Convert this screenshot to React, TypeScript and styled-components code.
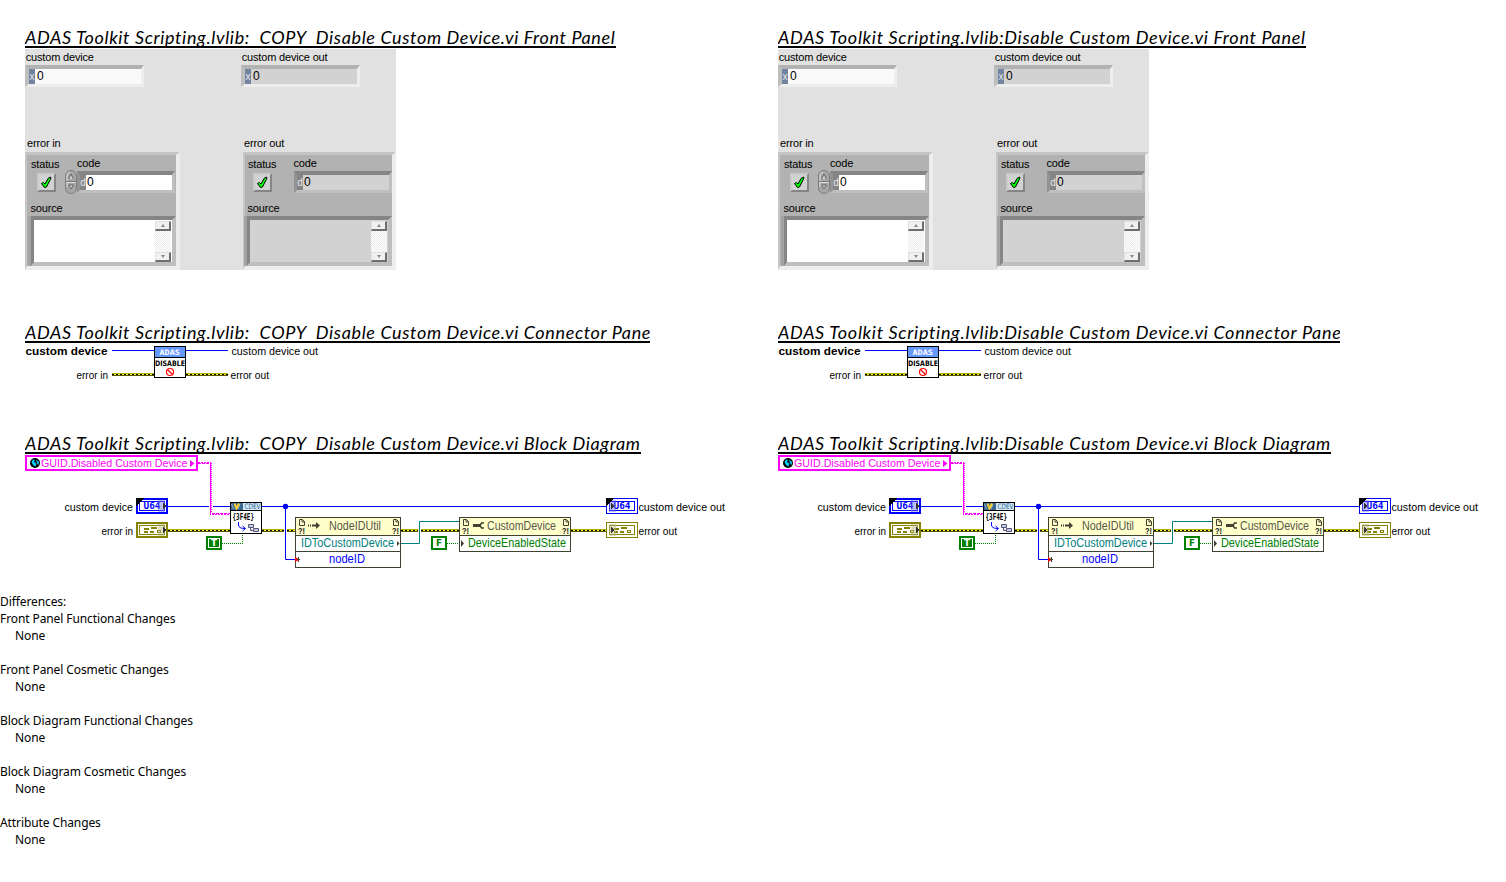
import React from 'react';
import styled, { createGlobalStyle } from 'styled-components';

const Global = createGlobalStyle`
  *{box-sizing:border-box}
  body{margin:0;background:#fff;color:#000;font-family:"Liberation Sans",Arial,sans-serif;overflow:hidden}
  svg{display:block}
`;
const Page = styled.main`width:1506px;height:882px;overflow:hidden;`;
const Columns = styled.div`display:flex;padding-left:25px;height:593px;`;
const Report = styled.section`width:753px;flex:none;`;
const Heading = styled.h2<{ $w: number; $top: number; $ls: number }>`
  margin:${p => p.$top}px 0 0;width:${p => p.$w}px;height:22px;
  border-bottom:2px solid #000;overflow:hidden;white-space:pre;
  font:italic 400 18px/22px Lato,sans-serif;letter-spacing:${p => p.$ls}px;
  font-variant-ligatures:none;
`;
const Panel = styled.div`
  margin-top:1px;width:371px;height:221px;background:#e1e1e1;display:flex;overflow:hidden;
`;
const PanelColumn = styled.div`width:216px;flex:none;display:flex;flex-direction:column;`;
const Label = styled.div<{ $x?: number; $top?: number }>`
  font-size:11px;line-height:14px;height:14px;padding-left:${p => p.$x ?? 0}px;
  margin-top:${p => p.$top ?? 0}px;white-space:nowrap;letter-spacing:-.17px;
`;
const Numeric = styled.div<{ $out?: boolean }>`
  margin:1px 0 0;width:119px;height:22px;display:flex;
  border:4px solid;border-width:4px 3px 3px 4px;
  border-color:#b2b2b2 #eee #eee #bebebe;
  background:${p => p.$out ? '#d2d2d2' : '#fafafa'};
  font-size:12px;line-height:15px;
`;
const Radix = styled.span<{ $code?: boolean }>`
  width:6px;background:${p => p.$code ? '#858585' : '#7284a0'};color:#e4e8ee;font-size:10px;text-align:center;
  margin-right:${p => p.$code ? 1 : 2}px;flex:none;overflow:hidden;
`;
const Cluster = styled.div<{ $out?: boolean }>`
  margin-top:2px;margin-left:${p => p.$out ? 2 : 0}px;width:${p => p.$out ? 153 : 155}px;height:118px;
  padding-left:${p => p.$out ? 0 : 2}px;
  border:3px solid;border-width:3px 4px 4px 2px;border-color:#c4c4c4 #ededed #ededed #c6c6c6;
  background:#b2b2b2;
`;
const StatusRow = styled.div`display:flex;height:46px;`;
const StatusCell = styled.div<{ $w: number }>`width:${p => p.$w}px;flex:none;padding-top:2px;`;
const Check = styled.div`
  margin:2px 0 0 8px;width:19px;height:19px;border:2px solid;
  border-color:#cacaca #858585 #858585 #cacaca;background:#d2d2d2;
`;
const CodeCell = styled.div`flex:1;padding-top:1px;`;
const CodeRow = styled.div`display:flex;height:24px;align-items:center;`;
const CodeField = styled.div<{ $out?: boolean }>`
  width:98px;height:22px;display:flex;border:3px solid;border-width:4px 3px 3px 3px;
  margin-left:${p => p.$out ? 1 : 0}px;
  border-color:#858585 #bfbfbf #bfbfbf #949494;background:${p => p.$out ? '#d2d2d2' : '#fff'};
  font-size:12px;line-height:15px;
`;
const SourceFrame = styled.div`
  width:148px;height:50px;margin:1px 0 0 -1px;border-left:3px solid #a4a4a4;
`;
const Source = styled.div<{ $out?: boolean }>`
  width:145px;height:50px;border:4px solid;border-width:4px 4px 4px 3px;
  border-color:#858585 #bebebe #bebebe #858585;background:${p => p.$out ? '#d2d2d2' : '#fff'};
  display:flex;justify-content:flex-end;padding:1px 1px 0 0;
`;
const Scroll = styled.div`
  width:16px;height:41px;display:flex;flex-direction:column;justify-content:space-between;
  background:repeating-conic-gradient(#fff 0 25%,#ececec 0 50%) 0 0/2px 2px;
`;
const ScrollButton = styled.div`
  height:10px;border:1px solid;border-width:1px 2px 2px 1px;border-color:#e0e0e0 #6e6e6e #6e6e6e #e0e0e0;
  background:#f0f0f0;display:flex;align-items:center;justify-content:center;
`;
const Connector = styled.div`height:90px;`;
const Diagram = styled.div`height:139px;`;
const Differences = styled.section`
  font:12px/17px "Noto Sans",sans-serif;letter-spacing:-.1px;
`;
const Difference = styled.div`height:51px;white-space:nowrap;`;
const Title = styled.div``;
const Result = styled.div`padding-left:15px;`;

const ARROW_UP = <svg width="4" height="3"><path d="M2 0L4 3H0Z" fill="#888" /></svg>;
const ARROW_DOWN = <svg width="4" height="3"><path d="M2 3L4 0H0Z" fill="#888" /></svg>;

const Tick = () => (
  <svg width="15" height="15" viewBox="0 0 15 15">
    <path d="M2.500 8.500L4.500 7.500L6 9L9 3.500L11.500 2L12 3L7.500 12L5.500 12.500Z" fill="#0f0" stroke="#000" strokeWidth="1" />
  </svg>
);
const Spinner = () => (
  <svg width="12" height="24" viewBox="0 0 12 24">
    <rect x=".5" y=".5" width="11" height="23" rx="5.500" fill="#a6a6a6" stroke="#7d7d7d" />
    <path d="M2 11V6a4 4 0 0 1 3-4M2 13v4" stroke="#dcdcdc" fill="none" />
    <path d="M1 11.500H11" stroke="#777" /><path d="M1 12.500H11" stroke="#ddd" />
    <path d="M3.500 9L6 4L8.500 9" fill="#ccc" stroke="#666" /><path d="M3.500 15H8.500L6 19Z" fill="#ccc" stroke="#666" />
  </svg>
);

const ErrorCluster = ({ out }: { out?: boolean }) => (
  <Cluster $out={out}>
    <StatusRow>
      <StatusCell $w={out ? 48 : 36}>
        <Label $x={out ? 3 : 2}>status</Label>
        <Check><Tick /></Check>
      </StatusCell>
      <CodeCell>
        <Label $x={out ? .5 : 12}>code</Label>
        <CodeRow>
          {!out && <Spinner />}
          <CodeField $out={out}><Radix $code>d</Radix>0</CodeField>
        </CodeRow>
      </CodeCell>
    </StatusRow>
    <Label $x={out ? 2.5 : 1.5}>source</Label>
    <SourceFrame>
      <Source $out={out}>
        <Scroll><ScrollButton>{ARROW_UP}</ScrollButton><ScrollButton>{ARROW_DOWN}</ScrollButton></Scroll>
      </Source>
    </SourceFrame>
  </Cluster>
);

const PanelSide = ({ out }: { out?: boolean }) => (
  <PanelColumn>
    <Label $x={.7} $top={1}>{out ? 'custom device out' : 'custom device'}</Label>
    <Numeric $out={out}><Radix>x</Radix>0</Numeric>
    <Label $x={out ? 3 : 2} $top={49}>{out ? 'error out' : 'error in'}</Label>
    <ErrorCluster out={out} />
  </PanelColumn>
);

type TProps = { x: number; y: number; w: number; s?: number; c?: string; b?: boolean; f?: string; children: React.ReactNode };
const T = ({ x, y, w, s = 11, c = '#000', b, f, children }: TProps) => (
  <text x={x} y={y} textLength={w} lengthAdjust="spacingAndGlyphs" fontSize={s} fill={c} fontWeight={b ? 700 : 400} fontFamily={f ?? 'Liberation Sans'}>{children}</text>
);
const ErrorWire = ({ x1, x2, y }: { x1: number; x2: number; y: number }) => (
  <g shapeRendering="crispEdges">
    <path d={`M${x1} ${y}H${x2}`} stroke="#b4ae00" strokeWidth="3" />
    <path d={`M${x1} ${y}H${x2}`} stroke="#ffff28" />
    <path d={`M${x1} ${y}H${x2}`} stroke="#000" strokeDasharray="2 2" />
    <path d={`M${x1} ${y + 1}H${x2}`} stroke="#5a5600" />
  </g>
);

const ConnectorPane = () => (
  <svg width="728" height="90" viewBox="25 343 728 90">
    <T x={25.5} y={355} w={82} b>custom device</T>
    <T x={76.5} y={379} w={31.5}>error in</T>
    <T x={231.5} y={355} w={86.5}>custom device out</T>
    <T x={230.5} y={379} w={38.5}>error out</T>
    <path d="M112 350.500H154M186 350.500H228" stroke="#0000ff" />
    <ErrorWire x1={112} x2={154} y={374.5} /><ErrorWire x1={186} x2={228} y={374.5} />
    <rect x="154.500" y="346.500" width="31" height="31" fill="#fff" stroke="#000" />
    <rect x="155" y="347" width="30" height="10" fill="#6699ff" />
    <path d="M155 357.500H185" stroke="#000" />
    <T x={159.5} y={354.5} w={20.5} s={7.5} b c="#fff" f="DejaVu Sans Mono">ADAS</T>
    <T x={155} y={366} w={30} s={7.5} b f="DejaVu Sans">DISABLE</T>
    <circle cx="170" cy="372" r="3.500" fill="none" stroke="#f00" strokeWidth="1.200" />
    <path d="M167.500 369.500L172.500 374.500" stroke="#f00" strokeWidth="1.200" />
  </svg>
);

const Terminal = ({ x, y, err, out }: { x: number; y: number; err?: boolean; out?: boolean }) => {
  const c = err ? '#848200' : '#0000ff';
  const m = out ? 1 : 2;
  return (
    <g transform={`translate(${x} ${y})`} shapeRendering="crispEdges">
      <rect x={m / 2} y={m / 2} width={32 - m} height={16 - m} fill="#fff" stroke={c} strokeWidth={m} />
      <rect x="3.500" y="3.500" width="25" height="9" fill="#fff" stroke={c} />
      {err
        ? <path d="M8.500 6.500h4v1h-4zM15.500 5.500h5v1h-5zM8.500 9.500h3v1h-3zM14.500 9.500h3v1h-3zM21.500 8.500h3v2h-3z" fill="none" stroke={c} />
        : <T x={7.5} y={11} w={17} s={8.5} b c={c} f="DejaVu Sans Mono">U64</T>}
      <rect x={out ? 3 : 22} y="2" width="7" height="12" fill={err ? '#b4b478' : '#6e6ee6'} opacity=".45" />
      <path d={out ? 'M5 5L8 8L5 11Z' : 'M27 5L30 8L27 11Z'} fill="#333" />
      {!err && <path d="M0 0H8L0 8Z" fill="#000" />}
    </g>
  );
};
const BoolConst = ({ x, y, v }: { x: number; y: number; v: string }) => (
  <g transform={`translate(${x} ${y})`}>
    <rect x="1" y="1" width="14" height="12" fill="#fff" stroke="#008000" strokeWidth="2" />
    {v === 'T' && <rect x="3" y="3" width="10" height="8" fill="#008000" />}
    <T x={5} y={10} w={6} s={8.5} b c={v === 'T' ? '#fff' : '#008000'} f="DejaVu Sans">{v}</T>
  </g>
);
const PageMark = ({ x, y }: { x: number; y: number }) => (
  <g transform={`translate(${x} ${y})`}>
    <path d="M1.500 .5H4.500L6.500 2.500V6.500H1.500ZM4 .5V3H6.500" fill="none" stroke="#404033" />
    <T x={0} y={15} w={7} s={9} b c="#222">?!</T>
  </g>
);

const BlockDiagram = () => (
  <svg width="728" height="139" viewBox="25 454 728 139">
    <rect x="26" y="456" width="171" height="14" fill="#fff" stroke="#ff00ff" strokeWidth="2" />
    <circle cx="35" cy="463" r="5" fill="#000" />
    <path d="M31.500 462L33 459.500L35 460L34 462L36.500 463.500L35.500 466.500L33 465ZM36 459.500L39 462L38.500 465.500L37 463Z" fill="#00cfff" />
    <T x={41} y={467} w={146.5} c="#ff00ff">GUID.Disabled Custom Device</T>
    <path d="M190 460L194.500 463.500L190 467Z" fill="#ff00ff" />
    <g fill="none" stroke="#ff00ff" shapeRendering="crispEdges">
      <path d="M198 462.500H210M212 514.500H230" strokeDasharray="2 1" />
      <path d="M198 463.500H210M212 513.500H230" strokeDasharray="3 1" />
      <path d="M211.500 463V513" strokeDasharray="1 1" />
      <path d="M210.500 462V515" />
    </g>

    <T x={64.5} y={511} w={68.5}>custom device</T>
    <T x={101.5} y={535} w={31.5}>error in</T>
    <path d="M168 506.500H209M213 506.500H230M262 506.500H606M285.500 506V559.500H296" fill="none" stroke="#0000ff" />
    <circle cx="285.500" cy="506.500" r="2.700" fill="#0000ff" />
    <ErrorWire x1={168} x2={230} y={530.5} /><ErrorWire x1={262} x2={284} y={530.5} /><ErrorWire x1={287} x2={295} y={530.5} />
    <ErrorWire x1={401} x2={418} y={530.5} /><ErrorWire x1={421} x2={459} y={530.5} /><ErrorWire x1={571} x2={606} y={530.5} />
    <Terminal x={136} y={498} /><Terminal x={136} y={522} err />
    <Terminal x={606} y={498} out /><Terminal x={606} y={522} err out />
    <T x={638.5} y={511} w={86.5}>custom device out</T>
    <T x={638.5} y={535} w={38.5}>error out</T>

    <rect x="230.500" y="502.500" width="31" height="31" fill="#fff" stroke="#000" />
    <rect x="231" y="503" width="12" height="7" fill="#3b6692" />
    <rect x="243" y="503" width="18" height="7" fill="#d4e8f6" />
    <path d="M231.500 504L233.500 509M238 509L240 504" fill="none" stroke="#8bb0d0" />
    <path d="M234.500 503.500L236.500 508.500L239 503.500" fill="none" stroke="#ffd22e" strokeWidth="2" />
    <path d="M231 510.500H261" stroke="#000" />
    <T x={244.5} y={509} w={16} s={7.5} c="#285f93" f="DejaVu Sans">CDEV</T>
    <T x={232.5} y={519.5} w={21.5} s={8.5} b f="DejaVu Sans Mono">{'{3F4E}'}</T>
    <path d="M238.500 522V525Q238.500 528.500 245 528.500M242.500 526L245.500 528.500L242.500 531" fill="none" stroke="#0000ff" />
    <path d="M248.500 524.500H253.500V527.500H248.500ZM253.500 528.500H258.500V531.500H253.500ZM250.500 528V530.500H253" fill="#c8c8e8" stroke="#555577" />

    <BoolConst x={206} y={536} v="T" />
    <path d="M222 543.500H243M242.500 535V543" stroke="#008000" strokeDasharray="1 1" />
    <rect x="295.500" y="517.500" width="105" height="50" fill="#fff" stroke="#404033" />
    <rect x="296" y="518" width="104" height="17" fill="#ffffcc" />
    <path d="M296 535.500H400M296 551.500H400" stroke="#404033" />
    <PageMark x={298} y={519} /><PageMark x={392} y={519} />
    <path d="M308 525.500H313" stroke="#404033" strokeWidth="2" strokeDasharray="1 1" />
    <path d="M313 524.500H316V522L320 525.500L316 529V526.500H313Z" fill="#404033" />
    <T x={329} y={530} w={52} s={12} c="#57574a">NodeIDUtil</T>
    <T x={301} y={547} w={93} s={12} c="#008080">IDToCustomDevice</T>
    <T x={329} y={563} w={36} s={12} c="#0000ff">nodeID</T>
    <path d="M397 541L399.500 543.500L397 546Z" fill="#404033" />
    <path d="M295 557L299.500 559.500L295 562Z" fill="#f00" />
    <path d="M298.500 557V562M297 559.500H300" stroke="#404033" />
    <path d="M401 543.500H419.500V521.500H459" fill="none" stroke="#008080" />

    <BoolConst x={431} y={536} v="F" />
    <path d="M447 543.500H459" stroke="#008000" strokeDasharray="1 1" />
    <rect x="459.500" y="517.500" width="111" height="34" fill="#fff" stroke="#404033" />
    <rect x="460" y="518" width="110" height="17" fill="#ffffcc" />
    <path d="M460 535.500H570" stroke="#404033" />
    <PageMark x={462} y={519} /><PageMark x={562} y={519} />
    <path d="M473 525.500H480" stroke="#404033" strokeWidth="3" />
    <path d="M484 523H481.500L480 525.500L481.500 528H484" fill="none" stroke="#404033" strokeWidth="1.500" />
    <T x={487} y={530} w={69} s={12} c="#57574a">CustomDevice</T>
    <T x={468} y={547} w={98} s={12} c="#008000">DeviceEnabledState</T>
    <path d="M461 540L464 543.500L461 547Z" fill="#404033" />
  </svg>
);

const VIReport = ({ name, widths, spacing }: { name: string; widths: number[]; spacing: number }) => (
  <Report>
    <Heading $w={widths[0]} $top={26} $ls={spacing}>{name} Front Panel</Heading>
    <Panel><PanelSide /><PanelSide out /></Panel>
    <Heading $w={widths[1]} $top={51} $ls={spacing}>{name} Connector Pane</Heading>
    <Connector><ConnectorPane /></Connector>
    <Heading $w={widths[2]} $top={-1} $ls={spacing}>{name} Block Diagram</Heading>
    <Diagram><BlockDiagram /></Diagram>
  </Report>
);

const changes = ['Front Panel Functional Changes', 'Front Panel Cosmetic Changes', 'Block Diagram Functional Changes', 'Block Diagram Cosmetic Changes', 'Attribute Changes'];

export default function App() {
  return (
    <Page>
      <Global />
      <Columns>
        <VIReport name="ADAS Toolkit Scripting.lvlib:  COPY  Disable Custom Device.vi" widths={[591, 625, 616]} spacing={.63} />
        <VIReport name="ADAS Toolkit Scripting.lvlib:Disable Custom Device.vi" widths={[528, 562, 553]} spacing={.68} />
      </Columns>
      <Differences>
        <Title>Differences:</Title>
        {changes.map(c => <Difference key={c}><Title>{c}</Title><Result>None</Result></Difference>)}
      </Differences>
    </Page>
  );
}
